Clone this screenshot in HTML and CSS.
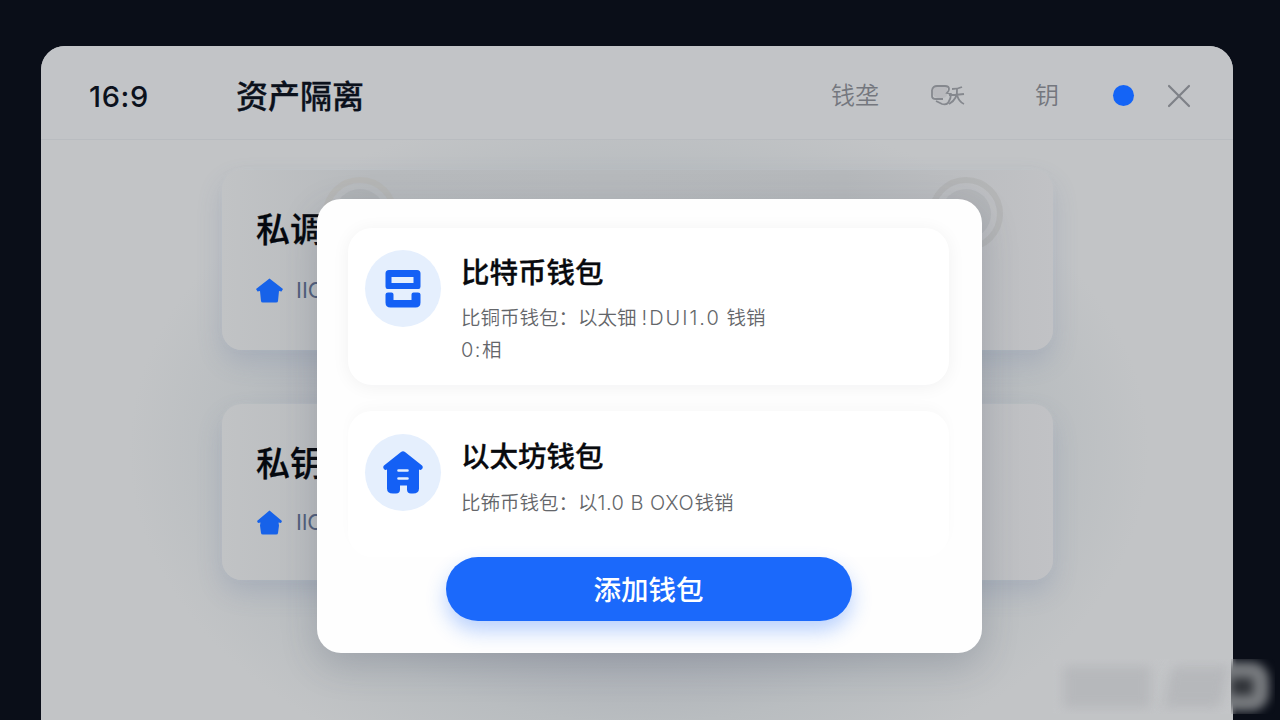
FILE: index.html
```html
<!DOCTYPE html>
<html lang="zh-CN">
<head>
<meta charset="UTF-8">
<meta name="viewport" content="width=device-width, initial-scale=1.0">
<title>资产隔离</title>
<link rel="stylesheet" href="styles.css">
</head>
<body>
<div class="window">
    <header class="topbar">
        <span class="clock">16:9</span>
        <h1>资产隔离</h1>
        <nav>
            <span class="nav-item">钱垄</span>
            <svg class="nav-scribble" width="36" height="24" viewBox="0 0 36 24">
                <path class="fill" d="M2 4q7-3 14-1v8q-1 3-5 3H7q-5-1-5-5z"/>
                <path d="M1 6q1-4 5-4h8q4 0 4 3 0 2-2 4l4 1q0 5-3 9-2 2-6 1l-6-3M1 6v6q0 3 4 3h7"/>
                <path d="M21 5q6 0 10-2M18 11q8 0 15-1M26 5q1 10-8 15M26 11q2 7 7 9"/>
            </svg>
            <span class="nav-item">钥</span>
            <span class="dot"></span>
            <svg class="close" width="24" height="24" viewBox="0 0 24 24"><path d="M2 2l20 20M22 2L2 22"/></svg>
        </nav>
    </header>
    <main>
        <section class="key-card">
            <h2>私调</h2>
            <p>
                <svg width="27" height="25" viewBox="0 0 27 25"><path d="M13.5 0.5L27 11l-1.500 2.500-2.500-.5-1 10q0 1.500-2 1.500H7q-2 0-2-1.500L4 13l-2.500.5L0 11z"/></svg>
                <span>IIO</span>
            </p>
            <i class="ring ring-left"></i>
            <i class="ring ring-right"></i>
        </section>
        <section class="key-card second">
            <h2>私钥</h2>
            <p>
                <svg width="27" height="25" viewBox="0 0 27 25"><path d="M13.500 0.500L26 11l-1 2-2.500-.5.500 3-1 7.500q0 1.500-2 1.500H7q-2 0-2-1.500L4 15.500l.5-3-2.500.5-1-2z"/></svg>
                <span>IlO</span>
            </p>
        </section>
    </main>
</div>

<div class="modal">
    <div class="wallet">
        <div class="wallet-icon">
            <svg width="36" height="38" viewBox="0 0 36 38">
                <path fill-rule="evenodd" d="M4 0h28q3.500 0 3.500 3.500v13q0 2.500-2 2.500H2.500q-2 0-2-2.500v-13Q.5 0 4 0zM6.500 7v6h22V7z"/>
                <path d="M3 22.500h3.500q2 0 2 2V30h18v-5.500q0-2 2-2H33q2.500 0 2.500 2v8q0 5-5 5h-25q-5 0-5-5v-8q0-2 2.500-2z"/>
            </svg>
        </div>
        <div class="wallet-text">
            <h3>比特币钱包</h3>
            <p>比铜币钱包：以太钿<span class="latin code-a">!DUI1.0</span>钱销<br><span class="latin code-c">0:</span>相</p>
        </div>
    </div>
    <div class="wallet wallet-last">
        <div class="wallet-icon">
            <svg width="40" height="43" viewBox="0 0 40 43">
                <path d="M18 1q2-1.500 4 0l17 13.500q1.500 1.500 0 3.500-1.500 1.500-3 .5v19q0 5-6 5h-2q-4 0-4-4v-4h-7v4q0 4-4 4h-3q-6 0-6-5v-19q-2 1-3-.5-1.500-2 0-3.500z"/>
                <path class="slot" d="M15.500 19.500h9M15.500 27.500h9"/>
            </svg>
        </div>
        <div class="wallet-text">
            <h3>以太坊钱包</h3>
            <p>比钸币钱包：以<span class="latin code-b">1.0 B OXO</span>钱销</p>
        </div>
    </div>
    <button type="button">添加钱包</button>
</div>

<div class="watermark">
    <i class="smudge"></i>
    <i class="smudge"></i>
    <div class="badge-clip"><i class="badge"></i></div>
</div>
</body>
</html>
```
FILE: styles.css
```css
* {
    box-sizing: border-box;
}

body {
    margin: 0;
    height: 720px;
    overflow: hidden;
    position: relative;
    padding: 46px 47px 0 41px;
    background-color: #0a0e18;
    font-family: Inter, "Noto Sans CJK SC", sans-serif;
}

h1,
h2,
h3,
p {
    margin: 0;
}

.window {
    height: 674px;
    border-radius: 24px 24px 0 0;
    background-color: #c1c3c6;
    overflow: hidden;
}

.topbar {
    height: 94px;
    display: flex;
    align-items: center;
    padding: 6px 42px 0 48px;
    border-bottom: 1px solid #b9bcc0;
    background-color: #c2c4c7;
    color: #0b111c;
}

.clock {
    width: 147px;
    font-size: 29px;
    font-weight: 500;
    letter-spacing: 0.6px;
    margin-top: 2px;
}

h1 {
    margin-top: 2px;
    font-size: 32px;
    line-height: 46px;
    font-weight: 500;
    -webkit-text-stroke: 0.3px;
}

nav {
    margin-left: auto;
    display: flex;
    align-items: center;
}

.nav-item {
    font-size: 24px;
    font-weight: 350;
    line-height: 36px;
    color: #74777e;
    margin-left: -1px;
}

.nav-scribble {
    margin: 0 69px 0 52px;
    fill: none;
    stroke: #85888e;
    stroke-width: 1.8;
}

.nav-scribble .fill {
    fill: rgba(136, 139, 145, 0.18);
    stroke: none;
}

.dot {
    width: 21px;
    height: 21px;
    margin: 0 33px 0 54px;
    border-radius: 50%;
    background-color: #1464f6;
}

.close {
    fill: none;
    stroke: #7e8187;
    stroke-width: 2.2;
    stroke-linecap: round;
}

main {
    height: 580px;
    padding: 30px 180px 0 181px;
    background: radial-gradient(ellipse 510px 350px at 598px 310px, #9b9faa 0%, #a5a9b2 45%, #b9bdc0 78%, #c2c4c6 100%);
}

.key-card {
    position: relative;
    height: 180px;
    margin-bottom: 54px;
    padding: 35px 34px;
    border-radius: 20px;
    background: linear-gradient(90deg, #c1c3c5, #b7babd 18%, #b5b8bb 75%, #c1c2c5);
    box-shadow: 0 12px 26px rgba(88, 108, 155, 0.2), 0 0 4px rgba(205, 207, 210, 0.3);
}

.key-card.second {
    height: 176px;
}

.key-card h2 {
    font-size: 34px;
    line-height: 50px;
    font-weight: 500;
    color: #05080e;
    -webkit-text-stroke: 0.3px;
}

.key-card p {
    display: flex;
    align-items: center;
    gap: 13px;
    margin-top: 21px;
    font-size: 22px;
    line-height: 28px;
    color: #515e7b;
}

.key-card.second p {
    margin-top: 19px;
}

.key-card svg {
    fill: #1762e9;
}

/* faint coin outlines behind the dialog */
.ring {
    position: absolute;
    top: 7px;
    width: 74px;
    height: 74px;
    border: 6px solid rgba(158, 158, 156, 0.28);
    border-radius: 50%;
}

.ring::after {
    content: "";
    position: absolute;
    inset: 6px;
    border-radius: 50%;
    background-color: rgba(151, 155, 160, 0.25);
}

.ring-left {
    left: 101px;
    border-color: rgba(178, 175, 165, 0.35);
}

.ring-right {
    right: 50px;
}

.modal {
    position: absolute;
    left: 317px;
    top: 199px;
    width: 665px;
    height: 454px;
    padding: 29px 33px 0 31px;
    border-radius: 24px;
    background-color: #fefefe;
    box-shadow: 0 12px 36px rgba(60, 68, 90, 0.22);
}

.wallet {
    display: flex;
    gap: 20px;
    height: 157px;
    padding: 22px 17px 0;
    border-radius: 24px;
    background-color: #fff;
    box-shadow: 0 2px 18px rgba(20, 25, 35, 0.055);
}

.wallet-last {
    height: 146px;
    margin-top: 26px;
    padding-top: 23px;
    box-shadow: 0 -6px 12px rgba(20, 25, 35, 0.02);
}

.wallet-icon {
    flex: none;
    display: flex;
    align-items: center;
    justify-content: center;
    width: 76px;
    height: 77px;
    border-radius: 50%;
    background-color: #e5effd;
}

.wallet-icon svg {
    fill: #1460f5;
}

.wallet-icon .slot {
    stroke: #e5effd;
    stroke-width: 2.6;
    stroke-linecap: round;
}

.wallet h3 {
    padding-top: 2px;
    font-size: 28.5px;
    line-height: 42px;
    font-weight: 500;
    color: #080a0e;
    -webkit-text-stroke: 0.3px;
}

.wallet p {
    margin-top: 8px;
    font-size: 19.5px;
    line-height: 32px;
    font-weight: 350;
    color: #64666a;
    white-space: nowrap;
}

.wallet-last p {
    margin-top: 9px;
}

.latin {
    display: inline-block;
    font-size: 20px;
    font-weight: 300;
}

.code-a {
    width: 90px;
    padding-left: 5px;
    letter-spacing: 2px;
}

.code-b {
    width: 97px;
    letter-spacing: 0.5px;
}

.code-c {
    letter-spacing: 1.5px;
}

button {
    display: block;
    width: 406px;
    height: 64px;
    margin: 0 0 0 98px;
    padding: 0 1px 3px 0;
    border: none;
    border-radius: 33px;
    background-color: #1b69fb;
    box-shadow: 0 10px 20px rgba(27, 105, 251, 0.3);
    color: #fff;
    font-family: inherit;
    font-size: 27.5px;
    font-weight: 500;
    position: relative;
}

.watermark {
    position: absolute;
    left: 1053px;
    top: 659px;
    width: 222px;
    height: 55px;
    display: flex;
    align-items: center;
    gap: 16px;
    padding-left: 10px;
    overflow: hidden;
    background: linear-gradient(90deg, rgba(198, 199, 202, 0.35) 178px, transparent 184px);
}

.smudge {
    width: 88px;
    height: 42px;
    background-color: #b6b8bb;
    filter: blur(6px);
}

.smudge + .smudge {
    width: 58px;
    transform: skewX(-12deg);
}

/* the badge only shows where the mark leaves the window */
.badge-clip {
    position: absolute;
    left: 178px;
    top: 0;
    width: 44px;
    height: 55px;
    overflow: hidden;
}

.badge {
    position: absolute;
    left: -16px;
    top: 3px;
    width: 54px;
    height: 49px;
    border: 16px solid #777a7e;
    border-radius: 18px;
    background-color: #303338;
    filter: blur(5px);
}
```
